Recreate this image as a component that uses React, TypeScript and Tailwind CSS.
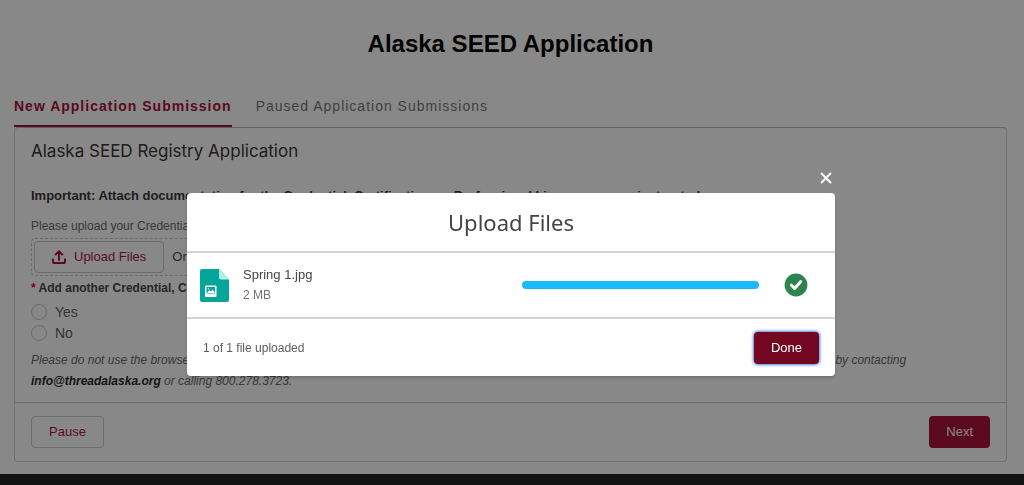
import { useState } from "react";

const tabs = ["New Application Submission", "Paused Application Submissions"];

function UploadIcon() {
  return (
    <svg viewBox="0 0 14 14" className="h-3.5 w-3.5" fill="none" stroke="currentColor" aria-hidden="true">
      <path d="M7 10V1.5M3.6 4.6 7 1.2l3.4 3.4" strokeWidth="1.9" strokeLinecap="round" strokeLinejoin="round" />
      <path d="M1 9.2v3.1c0 .4.3.7.7.7h10.6c.4 0 .7-.3.7-.7V9.2" strokeWidth="1.9" strokeLinecap="round" />
    </svg>
  );
}

function ImageFileIcon() {
  return (
    <svg viewBox="0 0 29 33" className="h-[33px] w-[29px] shrink-0" aria-hidden="true">
      <path d="M2 0h17l10 10.500V31a2 2 0 0 1-2 2H2a2 2 0 0 1-2-2V2a2 2 0 0 1 2-2z" fill="#06a59a" />
      <path d="M19 0l10 10.500h-8a2 2 0 0 1-2-2z" fill="#acf3e4" />
      <rect x="5" y="16.500" width="11.500" height="11.500" rx="1" fill="#fff" />
      <rect x="6.500" y="18" width="8.500" height="6.500" fill="#06a59a" />
      <path d="M7 24l2.500-3 1.600 1.600 1.700-2.100L15 24z" fill="#fff" />
      <circle cx="8.500" cy="19.800" r=".8" fill="#fff" />
    </svg>
  );
}

function SuccessIcon() {
  return (
    <svg viewBox="0 0 24 24" className="h-6 w-6" role="img" aria-label="Upload complete">
      <circle cx="12" cy="12" r="11.400" fill="#2e844a" />
      <path d="M7.400 12.200l3.200 3.200 6.200-6.800" fill="none" stroke="#fff" strokeWidth="3" strokeLinecap="round" strokeLinejoin="round" />
    </svg>
  );
}

function UploadModal({ onClose }: { onClose: () => void }) {
  return (
    <div className="fixed inset-0 flex items-start justify-center bg-[#080707]/48 pt-[169px] pr-[18px] pl-4">
      <div role="dialog" aria-labelledby="upload-title" className="flex w-full max-w-[648px] flex-col">
        <button onClick={onClose} aria-label="Close" className="mb-1.5 self-end p-0.5 text-white">
          <svg viewBox="0 0 14 14" className="h-3.5 w-3.5" stroke="currentColor" strokeWidth="1.800" strokeLinecap="round">
            <path d="M2.500 2.500l9 9M11.500 2.500l-9 9" />
          </svg>
        </button>

        <div className="rounded bg-white shadow-[0_2px_3px_rgba(0,0,0,0.16)]">
          <header className="flex h-[60px] items-center justify-center border-b-2 border-[#d4d4d4]">
            <h2 id="upload-title" className="font-['Noto_Sans',sans-serif] text-[22px] leading-7 text-[#444]">
              Upload Files
            </h2>
          </header>

          <div className="flex h-[66px] items-center border-b-2 border-[#d4d4d4] px-[13px]">
            <ImageFileIcon />
            <div className="ml-3.5 flex-1">
              <div className="text-[13px] leading-5 text-[#444]">Spring 1.jpg</div>
              <div className="text-xs leading-5 text-[#747474]">2 MB</div>
            </div>
            <div
              role="progressbar"
              aria-valuenow={100}
              aria-label="Spring 1.jpg"
              className="mr-[25px] h-2 w-[237px] rounded-full bg-[#1bb9ff]"
            />
            <div className="mr-3.5">
              <SuccessIcon />
            </div>
          </div>

          <footer className="flex h-[57px] items-center justify-between px-4">
            <span className="text-xs text-[#5c5c5c]">1 of 1 file uploaded</span>
            <button
              onClick={onClose}
              className="h-8 rounded bg-[#730722] px-[17px] text-[13px] text-white shadow-[0_0_3px_1px_#4a7fd6]"
            >
              Done
            </button>
          </footer>
        </div>
      </div>
    </div>
  );
}

export default function App() {
  const [open, setOpen] = useState(true);
  const [active, setActive] = useState(0);

  return (
    <div className="flex min-h-screen flex-col bg-white font-['Liberation_Sans',Arial,sans-serif] text-[#444]">
      <main className="flex-1 pr-[17px] pb-3 pl-3.5">
        <h1 className="pt-7 text-center text-2xl font-bold text-black">Alaska SEED Application</h1>

        <nav className="mt-9 flex gap-6">
          {tabs.map((t, i) => (
            <button
              key={t}
              onClick={() => setActive(i)}
              className={
                i === active
                  ? "border-b-2 border-[#a60c36] pb-[9px] text-sm leading-5 font-bold tracking-[1px] text-[#a60c36]"
                  : "border-b-2 border-transparent pb-[9px] text-sm leading-5 tracking-[1px] text-[#747474]"
              }
            >
              {t}
            </button>
          ))}
        </nav>

        <section className="rounded border border-[#d4d4d4] border-t-[#b8b8b8]">
          <div className="px-4 pt-[11px] pb-2.5">
            <h2 className="font-[Inter,sans-serif] text-[17px] leading-6 text-[#333]">Alaska SEED Registry Application</h2>
            <p className="mt-[23px] text-[13px] leading-5 font-bold text-[#333]">
              Important: Attach documentation for the Credential, Certification, or Professional License you are instructed
            </p>
            <p className="mt-2.5 text-xs leading-5 text-[#666]">
              Please upload your Credential, Certification, or License
            </p>

            <div className="mt-0.5 flex w-[320px] items-center gap-2 rounded border border-dashed border-[#c9c9c9] p-0.5">
              <button
                onClick={() => setOpen(true)}
                className="flex h-8 items-center gap-2 rounded border border-[#c9c9c9] px-[17px] text-[13px] text-[#a60c36]"
              >
                <UploadIcon />
                Upload Files
              </button>
              <span className="text-[13px]">Or drop files</span>
            </div>

            <fieldset>
              <legend className="pt-0.5 pb-[3px] text-xs leading-5 font-bold">
                <span className="text-[#ea001e]">*</span> Add another Credential, Certification, or License?
              </legend>
              {["Yes", "No"].map((v) => (
                <label key={v} className="flex h-[21px] items-center gap-2 text-sm text-[#5c5c5c]">
                  <input type="radio" name="another" className="h-4 w-4 appearance-none rounded-full border border-[#c9c9c9]" />
                  {v}
                </label>
              ))}
            </fieldset>

            <p className="mt-[7px] text-xs leading-[21px] text-[#666] italic">
              Please do not use the browser back button while completing this application. If you have questions about this form, get help from our registry staff team by contacting{" "}
              <a href="mailto:info@threadalaska.org" className="font-bold text-[#222]">
                info@threadalaska.org
              </a>{" "}
              or calling 800.278.3723.
            </p>
          </div>

          <div className="flex items-center justify-between border-t border-[#c9c9c9] px-4 pt-[13px] pb-[13px]">
            <button className="h-8 rounded border border-[#c9c9c9] px-[17px] text-[13px] text-[#a60c36]">Pause</button>
            <button className="h-8 rounded bg-[#a60c36] px-[17px] text-[13px] text-white">Next</button>
          </div>
        </section>
      </main>

      <footer className="h-[11px] bg-[#1f1f1f]" />

      {open && <UploadModal onClose={() => setOpen(false)} />}
    </div>
  );
}
